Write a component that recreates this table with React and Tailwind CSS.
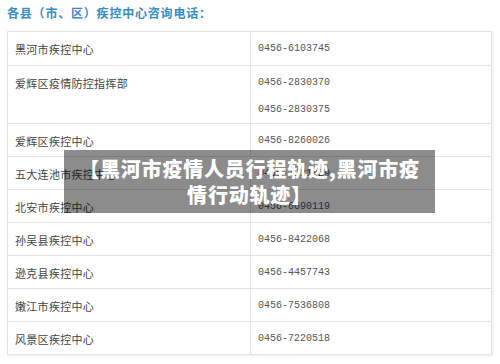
import React from "react";

const rows = [
  { name: "黑河市疾控中心", phones: ["0456-6103745"], h: "h-[33px]" },
  { name: "爱辉区疫情防控指挥部", phones: ["0456-2830370", "0456-2830375"], h: "h-[58px]" },
  { name: "爱辉区疾控中心", phones: ["0456-8260026"], h: "h-[33px]" },
  { name: "五大连池市疾控中心", phones: ["0456-7221329"], h: "h-[33px]" },
  { name: "北安市疾控中心", phones: ["0456-6690119"], h: "h-[33px]" },
  { name: "孙吴县疾控中心", phones: ["0456-8422068"], h: "h-[33px]" },
  { name: "逊克县疾控中心", phones: ["0456-4457743"], h: "h-[33px]" },
  { name: "嫩江市疾控中心", phones: ["0456-7536808"], h: "h-[33px]" },
  { name: "风景区疾控中心", phones: ["0456-7220518"], h: "h-[33px]" },
];

export default function App() {
  return (
    <div className="relative w-[500px] h-[364px] overflow-hidden bg-white" style={{ fontFamily: '"Noto Sans CJK SC", "Noto Sans", sans-serif' }}>
      <div className="h-[31px] pl-[7px] pt-[4px] text-[12px] font-bold text-[#3b8cc4] tracking-[0.8px] leading-[18px]">
        各县（市、区）疾控中心咨询电话：
      </div>
      <div className="ml-[7px] w-[485px] border border-[#e4e4e4] shadow-[1px_1px_2px_rgba(0,0,0,0.08)]">
        {rows.map((r, i) => (
          <div key={i} className={`flex ${r.h} ${i > 0 ? "border-t border-[#e4e4e4]" : ""}`}>
            <div className="w-[243px] pl-[7px] pt-[9px] text-[11px] leading-[16px] text-[#444] tracking-[0.3px] border-r border-[#e4e4e4]">
              {r.name}
            </div>
            <div className="flex-1 pl-[7px] pt-[10px] flex flex-col gap-[13px]">
              {r.phones.map((p) => (
                <div key={p} className="text-[10px] leading-[14px] text-[#555]" style={{ fontFamily: '"Liberation Mono", monospace' }}>
                  {p}
                </div>
              ))}
            </div>
          </div>
        ))}
      </div>
      <div className="absolute left-[64px] top-[150px] w-[371px] h-[63px] bg-black/45 flex flex-col items-center justify-center pt-[1px]">
        <div className="text-white font-black text-[20px] leading-[26px] tracking-[0.8px] text-center whitespace-nowrap" style={{ fontFamily: '"Noto Sans CJK SC", sans-serif' }}>
          【黑河市疫情人员行程轨迹,黑河市疫
        </div>
        <div className="text-white font-black text-[20px] leading-[26px] tracking-[0.8px] text-center whitespace-nowrap" style={{ fontFamily: '"Noto Sans CJK SC", sans-serif' }}>
          情行动轨迹】
        </div>
      </div>
    </div>
  );
}
